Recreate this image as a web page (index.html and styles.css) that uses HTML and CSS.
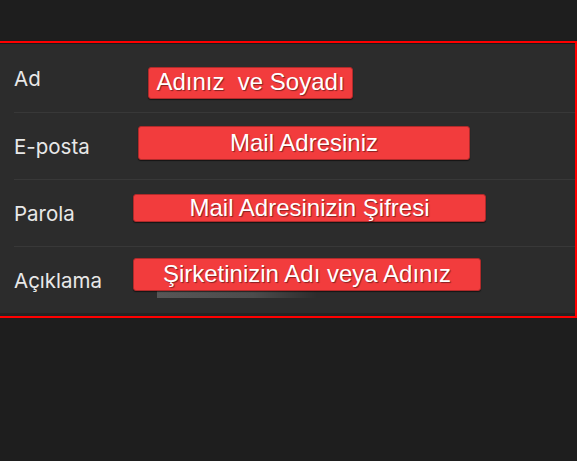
FILE: index.html
```html
<!DOCTYPE html>
<html lang="tr">
<head>
<meta charset="utf-8">
<title>Form</title>
<link rel="stylesheet" href="styles.css">
</head>
<body>
<div class="page">
  <div class="frame">
    <div class="panel">
      <div class="row first"><span class="label">Ad</span></div>
      <div class="row"><span class="label">E-posta</span></div>
      <div class="row"><span class="label">Parola</span></div>
      <div class="row last"><span class="label">Açıklama</span></div>
    </div>
    <div class="fade"></div>
    <div class="tag tag-name">Adınız  ve Soyadı</div>
    <div class="tag tag-mail">Mail Adresiniz</div>
    <div class="tag tag-pass">Mail Adresinizin Şifresi</div>
    <div class="tag tag-desc">Şirketinizin Adı veya Adınız</div>
  </div>
</div>
</body>
</html>
```
FILE: styles.css
```css
html, body {
  margin: 0;
  padding: 0;
  background: #1e1e1e;
  overflow: hidden;
}
.page {
  padding-top: 41px;
  width: 577px;
  height: 461px;
  box-sizing: border-box;
}
.frame {
  position: relative;
  margin-left: -2px;
  width: 579px;
  box-sizing: border-box;
  border: 2px solid #ff0000;
  background: #252525;
}
.panel {
  border-top: 1px solid #1a1a1a;
  border-bottom: 3px solid #232323;
  background: #2c2c2c;
}
.row {
  height: 67px;
  margin-left: 14px;
  border-bottom: 1px solid #383838;
  display: flex;
  align-items: center;
  box-sizing: border-box;
}
.row.first {
  height: 69px;
}
.row.last {
  border-bottom: none;
  height: 66px;
}
.label {
  font-family: Inter, "Noto Sans", sans-serif;
  font-size: 20.5px;
  color: #e8e8e8;
}
.fade {
  position: absolute;
  left: 157px;
  top: 248px;
  width: 160px;
  height: 7px;
  background: linear-gradient(to right, #565656, #4c4c4c 60%, rgba(44,44,44,0));
}
.tag {
  position: absolute;
  box-sizing: border-box;
  background: #f23c3d;
  border: 1px solid #b02a2a;
  border-radius: 3px;
  box-shadow: 0 1px 1px rgba(0,0,0,0.55);
  color: #ffffff;
  font-family: "Liberation Sans", Arial, sans-serif;
  font-size: 24px;
  text-align: center;
  white-space: pre;
  text-shadow: 1px 1px 1px rgba(0,0,0,0.45);
}
.tag-name {
  left: 148px;
  top: 24px;
  width: 205px;
  height: 32px;
  line-height: 28px;
}
.tag-mail {
  left: 138px;
  top: 83px;
  width: 332px;
  height: 34px;
  line-height: 31px;
}
.tag-pass {
  left: 133px;
  top: 151px;
  width: 353px;
  height: 28px;
  line-height: 26px;
}
.tag-desc {
  left: 133px;
  top: 215px;
  width: 348px;
  height: 33px;
  line-height: 29px;
}
```
